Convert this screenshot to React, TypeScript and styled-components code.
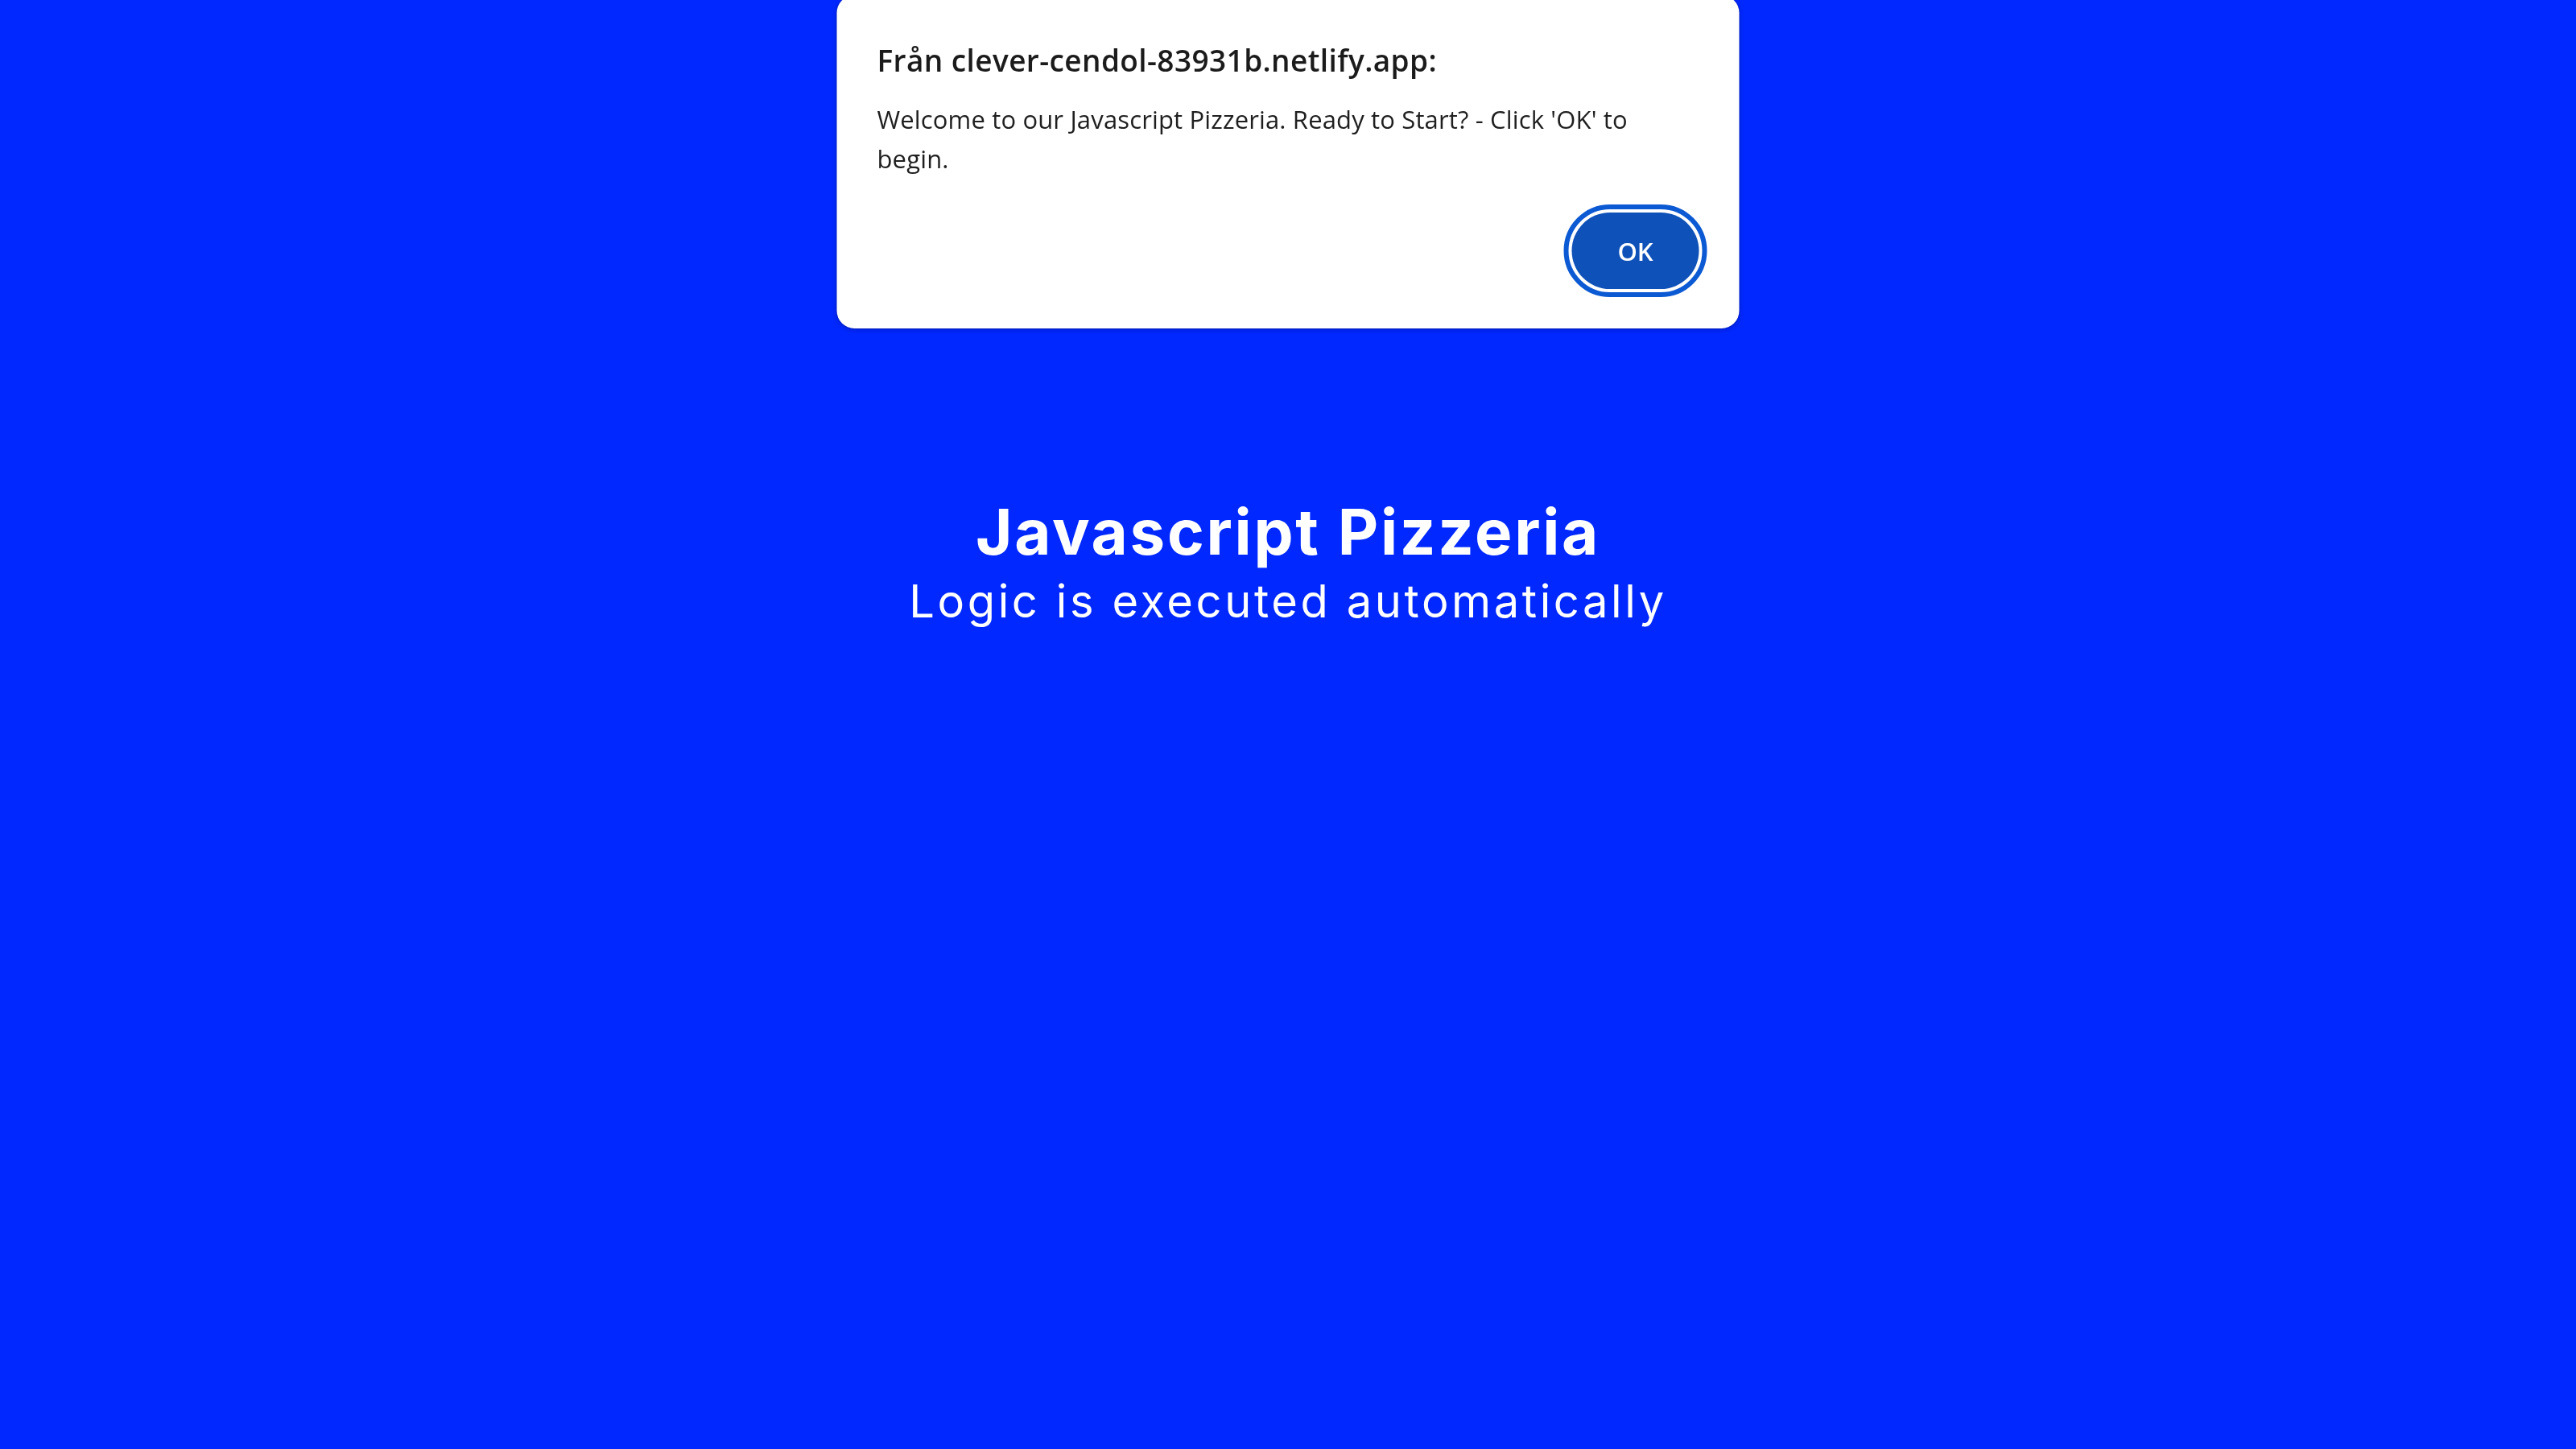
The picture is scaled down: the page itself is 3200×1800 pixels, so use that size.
import React from "react";
import styled, { createGlobalStyle } from "styled-components";

const GlobalStyle = createGlobalStyle`
  html, body {
    margin: 0;
    padding: 0;
    background: #0028ff;
  }
  body {
    font-family: "Inter", "Liberation Sans", sans-serif;
  }
`;

const Page = styled.main`
  min-height: 100vh;
  display: flex;
  flex-direction: column;
  align-items: center;
  padding-top: 622px;
  box-sizing: border-box;
  color: #ffffff;
`;

const Title = styled.h1`
  margin: 0;
  font-family: "Inter", "Liberation Sans", sans-serif;
  font-weight: 700;
  font-size: 78px;
  line-height: 1;
  letter-spacing: 2.7px;
`;

const Subtitle = styled.p`
  margin: 19px 0 0;
  font-family: "Inter", "Liberation Sans", sans-serif;
  font-weight: 400;
  font-size: 56px;
  line-height: 1;
  letter-spacing: 3.6px;
`;

const Dialog = styled.div`
  position: fixed;
  top: -6px;
  left: 50%;
  transform: translateX(-50%);
  width: 1121px;
  box-sizing: border-box;
  padding: 55px 50px 49px;
  background: #ffffff;
  border-radius: 22px;
  box-shadow: 0 0 0 1px rgba(0, 0, 0, 0.12), 0 2px 6px rgba(0, 0, 0, 0.18);
  display: flex;
  flex-direction: column;
  font-family: "Open Sans", "Noto Sans", sans-serif;
`;

const DialogTitle = styled.h2`
  margin: 0;
  font-size: 37px;
  font-weight: 600;
  line-height: normal;
  letter-spacing: 0.4px;
  color: #1b1b1b;
`;

const DialogMessage = styled.p`
  margin: 24px 0 0;
  max-width: 960px;
  font-size: 31px;
  font-weight: 400;
  line-height: 49px;
  letter-spacing: 0.15px;
  color: #1f1f1f;
`;

const Actions = styled.div`
  display: flex;
  justify-content: flex-end;
  margin-top: 42px;
`;

const OkButton = styled.button`
  width: 158px;
  height: 95px;
  border: none;
  border-radius: 48px;
  background: #0e51b9;
  color: #ffffff;
  font-family: "Open Sans", "Noto Sans", sans-serif;
  font-size: 31px;
  font-weight: 600;
  outline: 6px solid #0c5ad3;
  outline-offset: 4px;
  cursor: pointer;
`;

export default function App() {
  return (
    <>
      <GlobalStyle />
      <Page>
        <Title>Javascript Pizzeria</Title>
        <Subtitle>Logic is executed automatically</Subtitle>
      </Page>
      <Dialog role="alertdialog">
        <DialogTitle>Från clever-cendol-83931b.netlify.app:</DialogTitle>
        <DialogMessage>
          Welcome to our Javascript Pizzeria. Ready to Start? - Click 'OK' to
          begin.
        </DialogMessage>
        <Actions>
          <OkButton>OK</OkButton>
        </Actions>
      </Dialog>
    </>
  );
}
